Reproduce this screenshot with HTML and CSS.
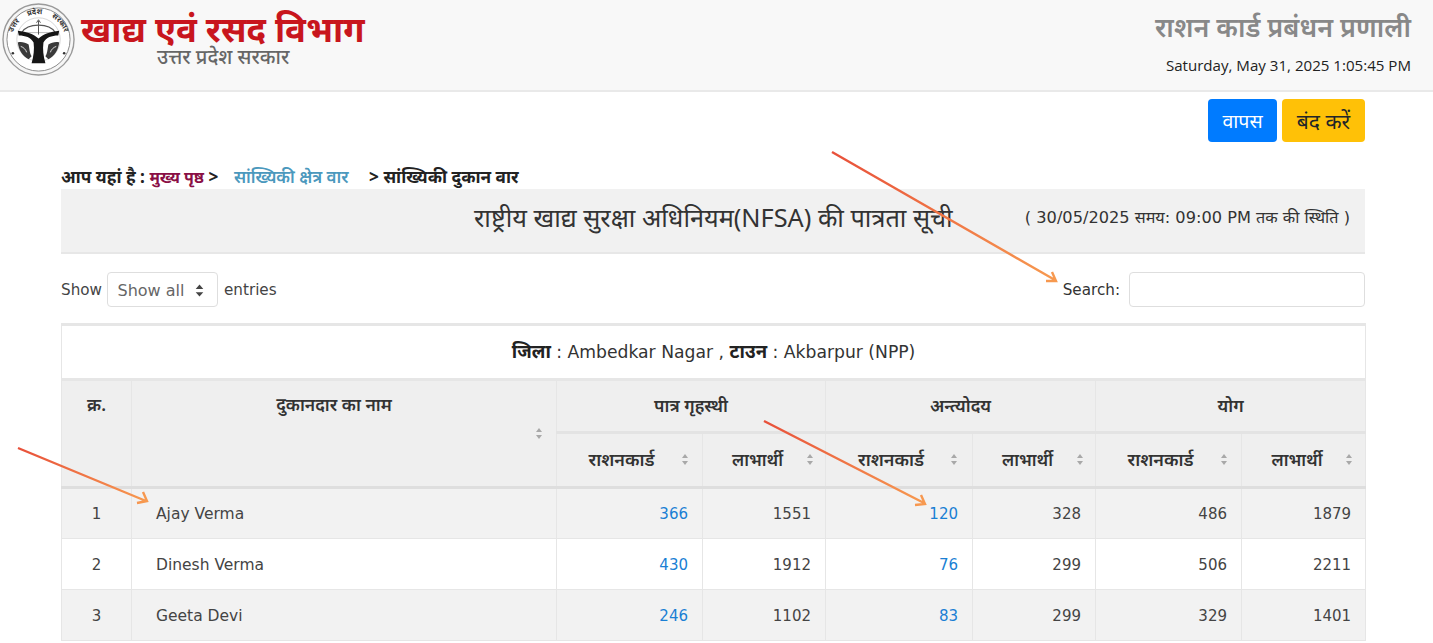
FILE: index.html
```html
<!DOCTYPE html>
<html lang="hi">
<head>
<meta charset="utf-8">
<title>राशन कार्ड प्रबंधन प्रणाली</title>
<link rel="stylesheet" href="styles.css">
</head>
<body>
<header class="site-header">
  <div class="brand">
    <svg class="emblem" viewBox="0 0 76 76" aria-hidden="true">
      <circle cx="37" cy="37" r="36" fill="#f6f6f6" stroke="#9a9a9a" stroke-width="1.4"/>
      <circle cx="37" cy="37" r="32" fill="#fff" stroke="#8a8a8a" stroke-width="1"/>
      <defs><path id="ring" d="M10.5 46 A27.5 27.5 0 1 1 63.5 46"/></defs>
      <text class="emblem-text" text-anchor="middle"><textPath href="#ring" startOffset="50%">उत्तर प्रदेश सरकार</textPath></text>
      <circle cx="37" cy="37" r="22" fill="none" stroke="#bbb" stroke-width="0.6"/>
      <path d="M20 30 C26 20 48 20 54 30" fill="none" stroke="#555" stroke-width="1.2"/>
      <path d="M20 30 H54" stroke="#888" stroke-width="0.6"/>
      <path d="M37 18 V32 M35 20 L37 17 L39 20" fill="none" stroke="#555" stroke-width="1"/>
      <path d="M16 28 C25 29 32 31 37 36 C42 31 49 29 58 28 L57 33 C50 33 45 35 42 40 C41 47 42 54 44 61 L30 61 C32 54 33 47 32 40 C29 35 24 33 17 33 Z" fill="#161616"/>
      <path d="M16 40 C19 39 24 40 27 42 C28 47 28 51 30 54 L27 57 C21 54 17 48 16 40 Z" fill="#3a3a3a"/>
      <path d="M58 40 C55 39 50 40 47 42 C46 47 46 51 44 54 L47 57 C53 54 57 48 58 40 Z" fill="#3a3a3a"/>
      <path d="M19 44 C22 45 24 47 25 50 M55 44 C52 45 50 47 49 50" fill="none" stroke="#ddd" stroke-width="1"/>
      <circle cx="11" cy="51" r="1.3" fill="#333"/>
      <circle cx="63" cy="51" r="1.3" fill="#333"/>
    </svg>
    <div class="brand-text">
      <div class="brand-title">खाद्य एवं रसद विभाग</div>
      <div class="brand-sub">उत्तर प्रदेश सरकार</div>
    </div>
  </div>
  <div class="system">
    <div class="system-title">राशन कार्ड प्रबंधन प्रणाली</div>
    <div class="system-date">Saturday, May 31, 2025 1:05:45 PM</div>
  </div>
</header>

<main class="content">
  <div class="actions">
    <a class="btn btn-blue" href="#">वापस</a>
    <a class="btn btn-yellow" href="#">बंद करें</a>
  </div>

  <nav class="crumbs">आप यहां है : <a class="crumb-home" href="#">मुख्य पृष्ठ</a> &gt; <a class="crumb-link" href="#">सांख्यिकी क्षेत्र वार</a> <span class="crumb-last">&gt; सांख्यिकी दुकान वार</span></nav>

  <section class="title-panel">
    <h1 class="title-main">राष्ट्रीय खाद्य सुरक्षा अधिनियम(NFSA) की पात्रता सूची</h1>
    <div class="title-note">( 30/05/2025 समय: 09:00 PM तक की स्थिति )</div>
  </section>

  <div class="controls">
    <div class="length">Show <span class="select">Show all <svg class="updown" viewBox="0 0 8 12"><path d="M4 0.5 L7.5 4.5 H0.5 Z M4 11.5 L0.5 7.5 H7.5 Z" fill="#444"/></svg></span> entries</div>
    <div class="search">Search: <span class="search-box"></span></div>
  </div>

  <table class="grid">
    <colgroup>
      <col class="c1"><col class="c2"><col class="c3"><col class="c4"><col class="c5"><col class="c6"><col class="c7"><col class="c8">
    </colgroup>
    <thead>
      <tr class="caption-row"><th colspan="8"><b>जिला</b> : Ambedkar Nagar , <b>टाउन</b> : Akbarpur (NPP)</th></tr>
      <tr class="head-top">
        <th rowspan="2" class="top">क्र.</th>
        <th rowspan="2" class="top name-head">दुकानदार का नाम<span class="sort sort-name"><i></i><i class="dn"></i></span></th>
        <th colspan="2">पात्र गृहस्थी</th>
        <th colspan="2">अन्त्योदय</th>
        <th colspan="2">योग</th>
      </tr>
      <tr class="head-sub">
        <th><span class="hcell">राशनकार्ड<span class="sort"><i></i><i class="dn"></i></span></span></th>
        <th><span class="hcell lab">लाभार्थी<span class="sort"><i></i><i class="dn"></i></span></span></th>
        <th><span class="hcell">राशनकार्ड<span class="sort"><i></i><i class="dn"></i></span></span></th>
        <th><span class="hcell lab">लाभार्थी<span class="sort"><i></i><i class="dn"></i></span></span></th>
        <th><span class="hcell">राशनकार्ड<span class="sort"><i></i><i class="dn"></i></span></span></th>
        <th><span class="hcell lab">लाभार्थी<span class="sort"><i></i><i class="dn"></i></span></span></th>
      </tr>
    </thead>
    <tbody>
      <tr class="odd"><td class="ctr">1</td><td>Ajay Verma</td><td class="num"><a href="#">366</a></td><td class="num">1551</td><td class="num"><a href="#">120</a></td><td class="num">328</td><td class="num">486</td><td class="num">1879</td></tr>
      <tr><td class="ctr">2</td><td>Dinesh Verma</td><td class="num"><a href="#">430</a></td><td class="num">1912</td><td class="num"><a href="#">76</a></td><td class="num">299</td><td class="num">506</td><td class="num">2211</td></tr>
      <tr class="odd"><td class="ctr">3</td><td>Geeta Devi</td><td class="num"><a href="#">246</a></td><td class="num">1102</td><td class="num"><a href="#">83</a></td><td class="num">299</td><td class="num">329</td><td class="num">1401</td></tr>
    </tbody>
  </table>
</main>

<svg class="arrows" viewBox="0 0 1433 643" aria-hidden="true">
  <defs>
    <linearGradient id="a1" gradientUnits="userSpaceOnUse" x1="832" y1="152" x2="1056" y2="281"><stop offset="0" stop-color="#e8503a"/><stop offset="1" stop-color="#f79a50"/></linearGradient>
    <linearGradient id="a2" gradientUnits="userSpaceOnUse" x1="18" y1="448" x2="147" y2="501"><stop offset="0" stop-color="#e8503a"/><stop offset="1" stop-color="#f79a50"/></linearGradient>
    <linearGradient id="a3" gradientUnits="userSpaceOnUse" x1="764" y1="421" x2="925" y2="504"><stop offset="0" stop-color="#e8503a"/><stop offset="1" stop-color="#f79a50"/></linearGradient>
  </defs>
  <path d="M832 152 L1055 280 M1046 281 L1056 281 L1052 272" stroke="url(#a1)" class="arrow"/>
  <path d="M18 448 L146 501 M137 503 L147 501 L143 492" stroke="url(#a2)" class="arrow"/>
  <path d="M764 421 L924 503 M915 505 L925 504 L921 495" stroke="url(#a3)" class="arrow"/>
</svg>
</body>
</html>
```
FILE: styles.css
```css
* { box-sizing: border-box; }
html, body { margin: 0; padding: 0; }
body {
  position: relative;
  height: 643px;
  overflow: hidden;
  background: #fff;
  color: #333;
  font-family: "DejaVu Sans", "Noto Sans", sans-serif;
  font-size: 15.2px;
}
a { text-decoration: none; }

.site-header {
  display: flex;
  justify-content: space-between;
  height: 92px;
  padding: 3px 22px 0 2px;
  background: #f8f8f8;
  border-bottom: 2px solid #e9e9e9;
}
.brand { display: flex; gap: 4px; }
.emblem { width: 75px; height: 75px; flex: none; }
.emblem-text {
  font-size: 7.5px;
  font-weight: 700;
  word-spacing: 8px;
  font-family: "Noto Sans", sans-serif;
  fill: #333;
}
.brand-text { padding-top: 7px; }
.brand-title {
  color: #c8161d;
  font-family: "Noto Sans", "Liberation Sans", sans-serif;
  font-size: 34.6px;
  font-weight: 700;
  line-height: 38px;
  white-space: nowrap;
}
.brand-sub {
  color: #666;
  font-family: "Noto Sans", sans-serif;
  font-size: 20px;
  line-height: 18px;
  margin-left: 76px;
  font-weight: 500;
  white-space: nowrap;
}
.system { text-align: right; padding-top: 5px; }
.system-title {
  color: #888;
  font-family: "Noto Sans", sans-serif;
  font-size: 26.8px;
  font-weight: 600;
  line-height: 38px;
}
.system-date {
  color: #222;
  font-family: "Open Sans", "Noto Sans", sans-serif;
  font-size: 15.1px;
  line-height: 22px;
  margin-top: 8px;
}

.content { margin: 0 68px 0 61px; }
.actions { display: flex; justify-content: flex-end; gap: 5px; padding-top: 7px; }
.btn {
  display: flex;
  align-items: center;
  justify-content: center;
  height: 43px;
  border-radius: 4px;
  font-family: "Noto Sans", sans-serif;
  font-size: 19.5px;
}
.btn-blue { width: 69px; background: #007bff; color: #fff; }
.btn-yellow { width: 83px; background: #ffc107; color: #212529; font-size: 21px; }

.crumbs {
  margin-top: 23px;
  height: 24px;
  font-family: "Noto Sans", sans-serif;
  font-size: 17.2px;
  font-weight: 700;
  line-height: 23px;
  color: #222;
  white-space: nowrap;
}
.crumb-home { color: #8a0f45; font-size: 16px; }
.crumb-link { color: #4b98bd; margin: 0 16px 0 11px; font-weight: 600; font-size: 17px; }

.title-panel {
  display: flex;
  align-items: center;
  justify-content: space-between;
  height: 65px;
  padding: 0 15px 8px 413px;
  background: #f1f1f1;
  border-bottom: 2px solid #e7e7e7;
}
.title-main {
  margin: 0;
  color: #333;
  font-family: "Noto Sans", "DejaVu Sans", sans-serif;
  font-size: 25.3px;
  font-weight: 400;
  line-height: 34px;
  white-space: nowrap;
}
.title-note {
  flex: none;
  font-size: 16.2px;
  color: #333;
  white-space: nowrap;
}

.controls {
  display: flex;
  justify-content: space-between;
  align-items: center;
  height: 69px;
  padding-top: 2px;
}
.length { color: #444; display: flex; align-items: center; gap: 5.5px; }
.select {
  display: flex;
  align-items: center;
  justify-content: space-between;
  width: 111px;
  height: 35px;
  padding: 2px 13px 0 9px;
  border: 1px solid #dedede;
  border-radius: 4px;
  color: #666;
  font-size: 16px;
}
.updown { width: 9px; height: 13px; }
.search { display: flex; align-items: center; gap: 9px; color: #333; }
.search-box {
  display: block;
  width: 236px;
  height: 35px;
  border: 1px solid #dedede;
  border-radius: 4px;
}

.grid {
  width: 1304px;
  border-collapse: collapse;
  table-layout: fixed;
  color: #333;
}
.c1 { width: 70px; } .c2 { width: 425px; } .c3 { width: 146px; } .c4 { width: 123px; }
.c5 { width: 147px; } .c6 { width: 123px; } .c7 { width: 146px; } .c8 { width: 124px; }

.grid th, .grid td { border: 1px solid #e6e6e6; padding: 0; }
.caption-row th {
  height: 55px;
  padding-bottom: 3px;
  background: #fff;
  border-top: 3px solid #e6e6e6;
  border-bottom: 3px solid #e6e6e6;
  font-size: 17.2px;
  font-weight: 400;
  color: #333;
}
.caption-row b { font-family: "Noto Sans", sans-serif; font-weight: 700; color: #222; font-size: 18.5px; }
.head-top th, .head-sub th {
  background: #efefef;
  font-family: "Noto Sans", sans-serif;
  font-size: 17.5px;
  font-weight: 600;
  color: #333;
}
.head-top th { height: 53px; padding-bottom: 3px; border-bottom: 3px solid #e3e3e3; }
.head-top th.top { vertical-align: top; padding: 11px 0 0; border-bottom: 3px solid #dedede; }
.name-head { position: relative; padding-right: 20px !important; }
.head-sub th { height: 55px; border-bottom: 3px solid #dedede; font-size: 18px; }
.hcell { display: flex; align-items: center; justify-content: center; gap: 27px; padding-left: 17px; padding-bottom: 2px; }
.hcell.lab { font-size: 17px; gap: 24px; }
.sort { display: inline-flex; flex-direction: column; gap: 3px; }
.sort i {
  display: block;
  width: 0; height: 0;
  border-left: 3px solid transparent;
  border-right: 3px solid transparent;
  border-bottom: 4px solid #a8a8a8;
}
.sort i.dn { border-bottom: 0; border-top: 4px solid #a8a8a8; }
.sort-name { position: absolute; right: 14px; top: 47px; }

.grid td { height: 51px; padding: 0 14px; font-size: 15px; color: #444; padding-top: 1px; }
.grid td:nth-child(2) { padding-left: 24px; font-size: 15.5px; }
.grid tr.odd td { background: #f2f2f2; }
.grid td.ctr { text-align: center; padding: 1px 0 0; }
.grid td.num { text-align: right; }
.grid td a { color: #1a7fd4; }

.arrows { position: absolute; left: 0; top: 0; width: 1433px; height: 643px; pointer-events: none; }
.arrow { fill: none; stroke-width: 2.4; }
```
